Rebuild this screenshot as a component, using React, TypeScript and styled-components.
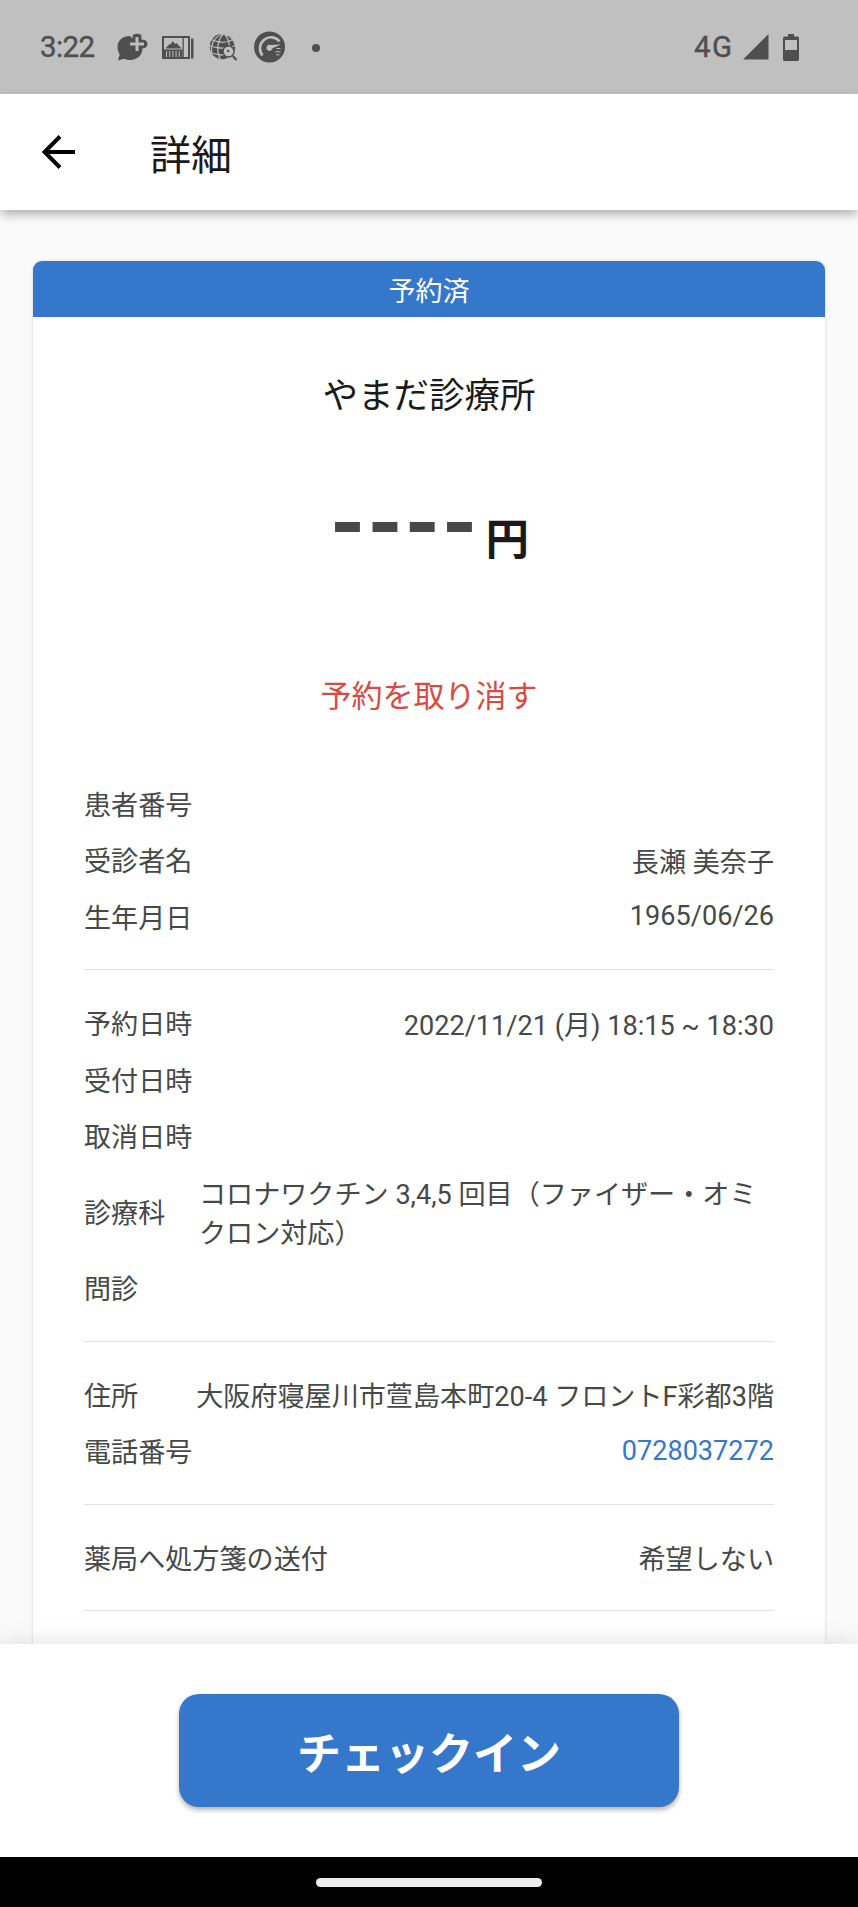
import React from "react";
import styled, { createGlobalStyle, css } from "styled-components";

const BLUE = "#3577cb";
const INK = "#464948";
const ICON = "#4f4f4f";

const GlobalStyle = createGlobalStyle`
  html, body { margin: 0; padding: 0; }
  body { background: #fafafa; font-family: Roboto, "Noto Sans CJK JP", sans-serif; }
  *, *::before, *::after { box-sizing: border-box; }
`;

const Screen = styled.div`
  width: 858px;
  height: 1907px;
  display: flex;
  flex-direction: column;
  overflow: hidden;
  background: #fafafa;
`;

const StatusBar = styled.div`
  flex: none;
  height: 94px;
  padding: 0 59px 0 40px;
  display: flex;
  align-items: center;
  justify-content: space-between;
  background: #c0c0c0;
  color: ${ICON};
`;

const StatusGroup = styled.div<{ $gap?: number }>`
  display: flex;
  align-items: center;
  gap: ${(p) => p.$gap ?? 0}px;
  svg { display: block; flex: none; }
`;

const StatusText = styled.span<{ $width: number; $spacing: number }>`
  width: ${(p) => p.$width}px;
  font-size: 29.5px;
  font-weight: 400;
  line-height: 34px;
  letter-spacing: ${(p) => p.$spacing}px;
  white-space: nowrap;
  -webkit-text-stroke: 0.4px ${ICON};
`;

const StatusIcons = styled.div`
  display: flex;
  align-items: center;
  margin-left: 21px;
  gap: 14px;
`;

const Dot = styled.span`
  width: 8px;
  height: 8px;
  margin-left: 12px;
  margin-top: 1px;
  border-radius: 50%;
  background: ${ICON};
`;

const AppBar = styled.header`
  flex: none;
  position: relative;
  z-index: 2;
  height: 116px;
  padding-left: 42px;
  display: flex;
  align-items: center;
  background: #fff;
  box-shadow: 0 5px 10px -1px rgba(0, 0, 0, 0.32);
  svg { display: block; }
`;

const Title = styled.h1`
  margin: 0 0 0 74px;
  padding-bottom: 1px;
  font-family: "Noto Sans CJK JP", sans-serif;
  font-size: 41px;
  font-weight: 400;
  line-height: 60px;
  color: #1a1a1a;
`;

const Content = styled.main`
  flex: 1;
  min-height: 0;
  overflow: hidden;
  padding: 51px 33px 0;
`;

const Card = styled.article`
  min-height: 1500px;
  border-radius: 9px 9px 0 0;
  background: #fff;
  box-shadow: 0 0 3px rgba(0, 0, 0, 0.17);
  overflow: hidden;
  display: flex;
  flex-direction: column;
  align-items: stretch;
`;

const Badge = styled.div`
  height: 56px;
  background: ${BLUE};
  color: #fff;
  font: 400 27px/57px "Noto Sans CJK JP", sans-serif;
  text-align: center;
`;

const Clinic = styled.h2`
  margin: 50px 0 0;
  font: 400 35.5px/52px "Noto Sans CJK JP", sans-serif;
  color: #1a1a1a;
  text-align: center;
`;

const Amount = styled.div`
  height: 120px;
  margin-top: 58px;
  padding-left: 1px;
  display: flex;
  justify-content: center;
  align-items: flex-start;
`;

const Dashes = styled.span`
  font: 700 90px/96px Roboto, sans-serif;
  letter-spacing: 1.9px;
  color: ${INK};
`;

const Yen = styled.span`
  margin: 30px 0 0 6px;
  font: 700 43.5px/60px "Noto Sans CJK JP", sans-serif;
  color: #1a1a1a;
`;

const CancelLink = styled.a`
  margin-top: 74px;
  font: 400 31px/46px "Noto Sans CJK JP", sans-serif;
  color: #d84b42;
  text-align: center;
`;

const Details = styled.div`
  margin: 58px 51px 0;
  display: flex;
  flex-direction: column;
`;

const Section = styled.section`
  padding: 24.5px 0;
  border-bottom: 1px solid #e2e2e2;
  &:first-child { padding-top: 0; }
  &:last-child { border-bottom: 0; }
`;

const Row = styled.div<{ $tall?: boolean }>`
  height: ${(p) => (p.$tall ? 95.5 : 56.5)}px;
  display: flex;
  align-items: center;
  justify-content: space-between;
  color: ${INK};
  font-size: 27.1px;
  line-height: 38.5px;
`;

const Label = styled.span`
  flex: none;
  padding-top: 1.5px;
  font-family: "Noto Sans CJK JP", sans-serif;
`;

const Value = styled.span<{ $mixed?: boolean; $link?: boolean; $block?: boolean }>`
  white-space: nowrap;
  font-family: Roboto, "Noto Sans CJK JP", sans-serif;
  ${(p) => p.$mixed && css`padding-top: 6px;`}
  ${(p) => p.$link && css`color: ${BLUE};`}
  ${(p) => p.$block && css`
    width: 575px;
    padding-top: 6px;
    white-space: pre-line;
  `}
`;

const Footer = styled.footer`
  flex: none;
  position: relative;
  z-index: 2;
  height: 213px;
  display: flex;
  justify-content: center;
  align-items: flex-start;
  padding-top: 50px;
  background: #fff;
  box-shadow: 0 0 22px rgba(0, 0, 0, 0.13);
`;

const CheckInButton = styled.button`
  width: 500px;
  height: 113px;
  padding: 0;
  border: 0;
  border-radius: 20px;
  background: ${BLUE};
  box-shadow: 0 3px 5px rgba(0, 0, 0, 0.3);
  color: #fff;
  font: 700 44px/60px "Noto Sans CJK JP", sans-serif;
`;

const NavBar = styled.div`
  flex: none;
  height: 50px;
  display: flex;
  justify-content: center;
  align-items: center;
  background: #000;
`;

const NavPill = styled.span`
  width: 226px;
  height: 9px;
  border-radius: 5px;
  background: #ececec;
`;

const ChatPlusIcon = () => (
  <svg width="32" height="32" viewBox="0 0 32 32">
    <path d="M14 5C6.500 5 1.500 9.500 1.500 16c0 3 .8 5.300 2.200 7.300L2 29.500l6-1.800c2 .9 4 1.300 6.200 1.300 7 0 12.300-5 12.300-11.500z" fill={ICON} />
    <path d="M21 3.500v17M14 13h13" stroke={ICON} strokeWidth="8.500" />
    <circle cx="21" cy="7" r="4.300" fill={ICON} />
    <circle cx="27.200" cy="13" r="4.300" fill={ICON} />
    <path d="M21 6v14M14 13h14" stroke="#c0c0c0" strokeWidth="3" />
  </svg>
);

const GalleryIcon = () => (
  <svg width="32" height="32" viewBox="0 0 32 32" fill={ICON}>
    <path d="M0 5h28v23H0zM2 7v19h24V7z" fillRule="evenodd" />
    <path d="M20.500 6h1.300v21h-1.300zM29 7.500h2.500v20H29z" />
    <path d="M3.500 17.500l4-4.500 1 .4 2.200-3.400 2.300 3 1.500-1 5 5.500z" />
    <path d="M2 18.500h18.500V27H2z" />
    <path d="M4.500 20V26M7.700 20V26M10.900 20V26M14.100 20V26M17.300 20V26" stroke="#c0c0c0" strokeWidth="1" />
  </svg>
);

const GlobeSearchIcon = () => (
  <svg width="32" height="32" viewBox="0 0 32 32" fill="none">
    <circle cx="14.500" cy="15.500" r="12.700" fill={ICON} />
    <g stroke="#c0c0c0" strokeWidth="1.200">
      <path d="M16 2.500C9 8 8 21 12.500 28.500M16 2.500c6 6 7 16 3 26M16 2.500C6 5 2 14 4 22.500M16 2.500c7 2 11 8 11 13M3 8.500c8 3.500 16 3.500 22 0M1 14.500c9 3.500 18 3.500 27 0M2 21.500c8 3 17 3 24 0" />
    </g>
    <circle cx="20.500" cy="20.500" r="5.500" fill="#c0c0c0" stroke={ICON} strokeWidth="1.400" />
    <circle cx="20.200" cy="20" r="1.200" fill={ICON} />
    <path d="M24.800 25l3.700 4" stroke={ICON} strokeWidth="2.200" />
  </svg>
);

const GaugeIcon = () => (
  <svg width="32" height="32" viewBox="0 0 32 32" fill="none">
    <circle cx="15.500" cy="16" r="15.500" fill={ICON} />
    <path d="M8.500 24.500A10.700 10.700 0 1 1 25.500 10.300" stroke="#c0c0c0" strokeWidth="2.600" />
    <path d="M27 13.500l-8.500 3.700a3 3 0 1 1-2-3.200z" fill="#c0c0c0" />
    <path d="M26.500 17.500h-4M26.500 20.700h-5M25.500 23.700h-3.500" stroke="#c0c0c0" strokeWidth="1.100" />
  </svg>
);

const SignalIcon = () => (
  <svg width="26" height="26" viewBox="0 0 26 26" fill={ICON}>
    <path d="M25.500 0v25.500H0z" />
  </svg>
);

const BatteryIcon = () => (
  <svg width="16" height="27" viewBox="0 0 16 27" fill={ICON}>
    <path fillRule="evenodd" d="M5 0h6v2.500h3.500A1.500 1.500 0 0 1 16 4v21.500a1.500 1.500 0 0 1-1.500 1.500h-13A1.500 1.500 0 0 1 0 25.500V4a1.500 1.500 0 0 1 1.500-1.500H5zM2 6v10h12V6z" />
  </svg>
);

const BackIcon = () => (
  <svg width="34" height="34" viewBox="0 0 34 34" fill="none" stroke="#000" strokeWidth="4">
    <path d="M18 1.500L2.500 17 18 32.500M3 17h30" />
  </svg>
);

export default function App() {
  return (
    <>
      <GlobalStyle />
      <Screen>
        <StatusBar>
          <StatusGroup>
            <StatusText $width={55} $spacing={-0.6}>3:22</StatusText>
            <StatusIcons>
              <ChatPlusIcon />
              <GalleryIcon />
              <GlobeSearchIcon />
              <GaugeIcon />
              <Dot />
            </StatusIcons>
          </StatusGroup>
          <StatusGroup $gap={14}>
            <StatusText $width={35} $spacing={1.5}>4G</StatusText>
            <SignalIcon />
            <BatteryIcon />
          </StatusGroup>
        </StatusBar>
        <AppBar>
          <BackIcon />
          <Title>詳細</Title>
        </AppBar>
        <Content>
          <Card>
            <Badge>予約済</Badge>
            <Clinic>やまだ診療所</Clinic>
            <Amount>
              <Dashes>----</Dashes>
              <Yen>円</Yen>
            </Amount>
            <CancelLink>予約を取り消す</CancelLink>
            <Details>
              <Section>
                <Row><Label>患者番号</Label></Row>
                <Row><Label>受診者名</Label><Value $mixed>長瀬 美奈子</Value></Row>
                <Row><Label>生年月日</Label><Value>1965/06/26</Value></Row>
              </Section>
              <Section>
                <Row><Label>予約日時</Label><Value $mixed>2022/11/21 (月) 18:15 ~ 18:30</Value></Row>
                <Row><Label>受付日時</Label></Row>
                <Row><Label>取消日時</Label></Row>
                <Row $tall>
                  <Label>診療科</Label>
                  <Value $block>{"コロナワクチン 3,4,5 回目（ファイザー・オミ\nクロン対応）"}</Value>
                </Row>
                <Row><Label>問診</Label></Row>
              </Section>
              <Section>
                <Row><Label>住所</Label><Value $mixed>大阪府寝屋川市萱島本町20-4 フロントF彩都3階</Value></Row>
                <Row><Label>電話番号</Label><Value $link>0728037272</Value></Row>
              </Section>
              <Section>
                <Row><Label>薬局へ処方箋の送付</Label><Value $mixed>希望しない</Value></Row>
              </Section>
              <Section />
            </Details>
          </Card>
        </Content>
        <Footer>
          <CheckInButton>チェックイン</CheckInButton>
        </Footer>
        <NavBar>
          <NavPill />
        </NavBar>
      </Screen>
    </>
  );
}
